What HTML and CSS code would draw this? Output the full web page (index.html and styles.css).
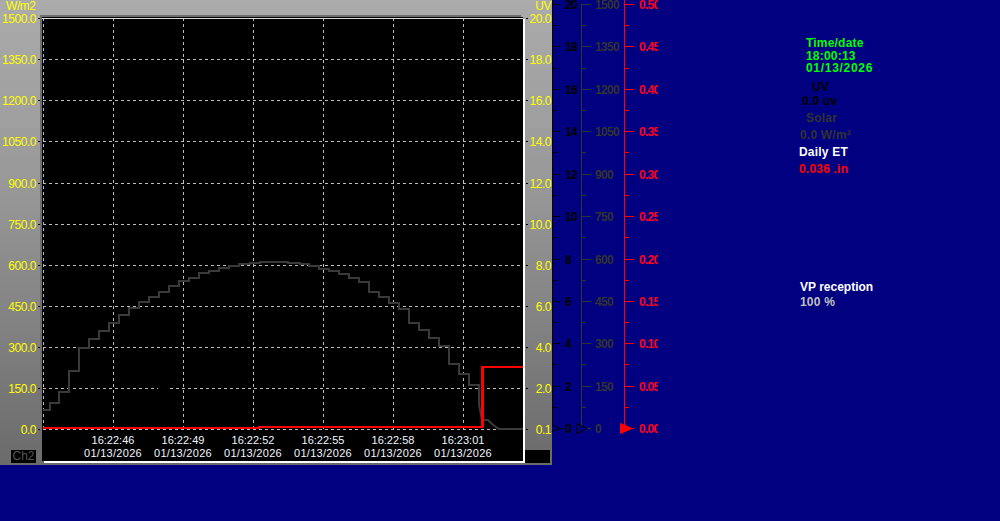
FILE: index.html
```html
<!DOCTYPE html>
<html lang="en">
<head>
<meta charset="utf-8">
<title>Weather chart</title>
<link rel="stylesheet" href="styles.css">
</head>
<body>
<main class="screen">
  <section class="panel">
    <svg class="axis-left" width="40" height="465" viewBox="0 0 40 465">
      <text x="6" y="10" class="ax">W/m2</text>
      <g class="ax end">
        <text x="36" y="22.500">1500.0</text><text x="36" y="63.500">1350.0</text><text x="36" y="104.500">1200.0</text>
        <text x="36" y="145.500">1050.0</text><text x="36" y="187.500">900.0</text><text x="36" y="228.500">750.0</text>
        <text x="36" y="269.500">600.0</text><text x="36" y="310.500">450.0</text><text x="36" y="351.500">300.0</text>
        <text x="36" y="392.500">150.0</text><text x="36" y="433.500">0.0</text>
      </g>
      <path class="tick" d="M38 18.500h2M38 59.500h2M38 100.500h2M38 141.500h2M38 183.500h2M38 224.500h2M38 265.500h2M38 306.500h2M38 347.500h2M38 388.500h2M38 429.500h2"/>
    </svg>
    <div class="ch-box">Ch2</div>
    <div class="plot">
      <svg class="plot-svg" width="481" height="416" viewBox="42 17 481 416">
        <path class="grid" d="M43.500 18V430M113.500 18V430M183.500 18V430M253.500 18V430M323.500 18V430M393.500 18V430M463.500 18V430"/>
        <path class="grid" d="M43 59.500H523M43 100.500H523M43 141.500H523M43 183.500H523M43 224.500H523M43 265.500H523M43 306.500H523M43 347.500H523M43 388.500H158M170 388.500H368M373 388.500H523M43 429.500H523"/>
        <path class="top-line" d="M42 18.500H523"/>
        <path class="solar" d="M43 410H50V403H59V392H69V371H79V348H89V339H99V331H109V323H119V315H129V308H139V302H149V297H159V292H169V286H179V281H189V278H199V273H209V271H219V268H229V266H239V264H250V263H260V262H288V263H300V264H309V266H319V269H329V271H339V274H349V278H359V282H369V292H379V297H389V303H399V309H409V323H419V330H429V338H439V346H449V364H459V374H469V385H479V405L482 420H488L491 423L497 428L499 429H523"/>
        <path class="et" d="M43 428H259V427H482V367H523"/>
        <path class="et-rise" d="M482.500 427V367"/>
      </svg>
      <div class="times">
        <div class="stamp"><span>16:22:46</span><span class="date">01/13/2026</span></div>
        <div class="stamp"><span>16:22:49</span><span class="date">01/13/2026</span></div>
        <div class="stamp"><span>16:22:52</span><span class="date">01/13/2026</span></div>
        <div class="stamp"><span>16:22:55</span><span class="date">01/13/2026</span></div>
        <div class="stamp"><span>16:22:58</span><span class="date">01/13/2026</span></div>
        <div class="stamp"><span>16:23:01</span><span class="date">01/13/2026</span></div>
      </div>
    </div>
    <svg class="axis-right" width="29" height="465" viewBox="523 0 29 465">
      <text x="551" y="10" class="ax end">UV</text>
      <g class="ax end">
        <text x="551" y="22.500">20.0</text><text x="551" y="63.500">18.0</text><text x="551" y="104.500">16.0</text>
        <text x="551" y="145.500">14.0</text><text x="551" y="187.500">12.0</text><text x="551" y="228.500">10.0</text>
        <text x="551" y="269.500">8.0</text><text x="551" y="310.500">6.0</text><text x="551" y="351.500">4.0</text>
        <text x="551" y="392.500">2.0</text><text x="551" y="433.500">0.1</text>
      </g>
      <path class="tick" d="M526 18.500h2M526 59.500h2M526 100.500h2M526 141.500h2M526 183.500h2M526 224.500h2M526 265.500h2M526 306.500h2M526 347.500h2M526 388.500h2M526 429.500h2"/>
      <rect class="blackout" x="525" y="450" width="25" height="13"/>
    </svg>
  </section>
  <svg class="scales" width="114" height="465" viewBox="544 0 114 465">
    <path class="s-black" d="M552.500 0V428M552 4.500h8M552 25.500h5M552 46.500h8M552 68.500h5M552 89.500h8M552 110.500h5M552 131.500h8M552 152.500h5M552 174.500h8M552 195.500h5M552 216.500h8M552 237.500h5M552 259.500h8M552 280.500h5M552 301.500h8M552 322.500h5M552 343.500h8M552 364.500h5M552 386.500h8M552 407.500h5M552 428.500h8"/>
    <path class="s-grey" d="M581.500 4V428M581 4.500h10M581 25.500h5M581 46.500h10M581 68.500h5M581 89.500h10M581 110.500h5M581 131.500h10M581 152.500h5M581 174.500h10M581 195.500h5M581 216.500h10M581 237.500h5M581 259.500h10M581 280.500h5M581 301.500h10M581 322.500h5M581 343.500h10M581 364.500h5M581 386.500h10M581 407.500h5M581 428.500h10"/>
    <path class="s-red" d="M624.500 0V428M624 4.500h10M624 25.500h5M624 46.500h10M624 68.500h5M624 89.500h10M624 110.500h5M624 131.500h10M624 152.500h5M624 174.500h10M624 195.500h5M624 216.500h10M624 237.500h5M624 259.500h10M624 280.500h5M624 301.500h10M624 322.500h5M624 343.500h10M624 364.500h5M624 386.500h10M624 407.500h5M624 428.500h10"/>
    <g class="t-black">
      <text x="565" y="8.500">20</text><text x="565" y="50.500">18</text><text x="565" y="93.500">16</text><text x="565" y="135.500">14</text><text x="565" y="178.500">12</text><text x="565" y="220.500">10</text><text x="565" y="263.500">8</text><text x="565" y="305.500">6</text><text x="565" y="347.500">4</text><text x="565" y="390.500">2</text><text x="565" y="432.500">0</text>
    </g>
    <g class="t-grey">
      <text x="595" y="8.500">1500</text><text x="595" y="50.500">1350</text><text x="595" y="93.500">1200</text><text x="595" y="135.500">1050</text><text x="595" y="178.500">900</text><text x="595" y="220.500">750</text><text x="595" y="263.500">600</text><text x="595" y="305.500">450</text><text x="595" y="347.500">300</text><text x="595" y="390.500">150</text><text x="595" y="432.500">0</text>
    </g>
    <g class="t-red">
      <text x="639" y="8.500">0.50</text><text x="639" y="50.500">0.45</text><text x="639" y="93.500">0.40</text><text x="639" y="135.500">0.35</text><text x="639" y="178.500">0.30</text><text x="639" y="220.500">0.25</text><text x="639" y="263.500">0.20</text><text x="639" y="305.500">0.15</text><text x="639" y="347.500">0.10</text><text x="639" y="390.500">0.05</text><text x="639" y="432.500">0.00</text>
    </g>
    <path class="tri-blue" d="M546.500 423.500L560 428.500L546.500 433.500Z"/>
    <path class="tri-blue" d="M576.500 423.500L587 428.500L576.500 433.500Z"/>
    <path class="tri-red" d="M620.500 423.500L632 428.500L620.500 433.500Z"/>
    <path class="s-black" d="M560 428.500h3"/>
    <path class="s-grey" d="M587 428.500h4"/>
    <path class="s-red" d="M632 428.500h2"/>
  </svg>
  <aside class="readouts">
    <div class="block block-time">
      <div class="lime">Time/date</div>
      <div class="lime tight">18:00:13</div>
      <div class="lime tight wide">01/13/2026</div>
    </div>
    <div class="dark uv-title">UV</div>
    <div class="dark uv-value">0.0 uv</div>
    <div class="dim solar-title">Solar</div>
    <div class="dim solar-value">0.0 W/m²</div>
    <div class="white et-title">Daily ET</div>
    <div class="red et-value">0.036 .in</div>
    <div class="white vp-title">VP reception</div>
    <div class="silver vp-value">100 %</div>
  </aside>
</main>
</body>
</html>
```
FILE: styles.css
```css
html, body { margin: 0; padding: 0; height: 100%; overflow: hidden; background: #000080; }
.screen { display: flex; align-items: flex-start; width: 1000px; height: 521px; font-family: "Liberation Sans", Arial, sans-serif; }
.panel { position: relative; display: flex; flex: none; width: 552px; height: 465px; box-sizing: border-box; background: linear-gradient(180deg, #ababab 0%, #989898 40%, #6b6b6b 100%); }
.axis-left { flex: none; display: block; }
.axis-right { flex: none; display: block; }
.ax, .ax text { font: 12px "Liberation Sans", Arial, sans-serif; letter-spacing: -.45px; fill: #ffff00; }
.end { text-anchor: end; }
.tick { stroke: #000; stroke-width: 1; fill: none; }
.blackout { fill: #000; }
.ch-box { position: absolute; left: 11px; top: 450px; width: 25px; height: 13px; background: #000; color: #555; font-size: 12px; line-height: 13px; text-align: center; }
.plot { flex: none; width: 481px; height: 444px; margin: 17px 0 0 2px; background: #000; box-shadow: -2px -2px 0 #6e6e6e, 2px 2px 0 #fff; }
.plot-svg { display: block; }
.grid { fill: none; stroke: #bdbdbd; stroke-width: 1; stroke-dasharray: 3 3; }
.top-line { stroke: #e0e0e0; stroke-width: 1; }
.solar { fill: none; stroke: #3a3a3a; stroke-width: 2; }
.et { fill: none; stroke: #ff0000; stroke-width: 2; }
.et-rise { fill: none; stroke: #ff0000; stroke-width: 3; }
.times { display: flex; padding-left: 36px; }
.stamp { display: flex; flex-direction: column; align-items: center; width: 70px; color: #f0f6ff; font-size: 11px; line-height: 13px; padding-top: 1px; }
.date { letter-spacing: .3px; }
.scales { flex: none; display: block; margin-left: -8px; }
.s-black { stroke: #000; fill: none; }
.s-grey { stroke: #333; fill: none; }
.s-red { stroke: #ff0000; fill: none; }
.t-black text, .t-grey text, .t-red text { font: bold 12px "Liberation Sans", Arial, sans-serif; letter-spacing: -.7px; }
.t-black text { fill: #000; }
.t-grey text { fill: #333; }
.t-red text { fill: #ff0020; }
.tri-blue { fill: #000080; stroke: #000; }
.tri-red { fill: #ff0000; stroke: #ff0000; }
.readouts { display: flex; flex-direction: column; align-items: flex-start; flex: none; width: 200px; margin-left: 141px; font-size: 12px; font-weight: bold; line-height: 13px; letter-spacing: .2px; }
.block-time { margin: 37px 0 0 7px; }
.tight { line-height: 12px; }
.wide { letter-spacing: .7px; }
.lime { color: #00ff00; }
.dark { color: #000; }
.dim { color: #333; }
.white { color: #fff; }
.red { color: #ff0000; }
.silver { color: #c0c0c0; }
.uv-title { margin: 7px 0 0 13px; }
.uv-value { margin: 1px 0 0 3px; }
.solar-title { margin: 4px 0 0 7px; }
.solar-value { margin: 4px 0 0 1px; }
.et-title { margin: 4px 0 0 0; }
.et-value { margin: 4px 0 0 0; }
.vp-title { margin: 105px 0 0 1px; letter-spacing: 0; }
.vp-value { margin: 2px 0 0 1px; }
```
